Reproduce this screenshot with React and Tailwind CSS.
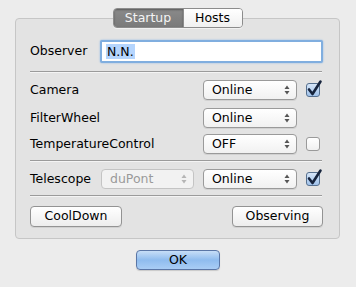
import React from 'react'

const font = { fontFamily: '"DejaVu Sans", "Noto Sans", sans-serif' }

function Arrows({ dim }) {
  const c = dim ? '#b5b5b5' : '#555'
  return (
    <svg width="6" height="10" viewBox="0 0 6 10" className="shrink-0">
      <path d="M3 0.5 L5.5 4 L0.5 4 Z" fill={c} />
      <path d="M3 9.5 L5.5 6 L0.5 6 Z" fill={c} />
    </svg>
  )
}

function Popup({ value, width = 'w-[94px]', dim }) {
  return (
    <div
      className={`${width} h-[20px] shrink-0 flex items-center justify-between pl-[8px] pr-[6px] rounded-[4px] border ${
        dim ? 'border-[#c4c4c4] bg-[#f2f2f2] text-[#9a9a9a]' : 'border-[#9a9a9a] bg-gradient-to-b from-white to-[#f1f1f1] text-black shadow-[0_1px_0_rgba(0,0,0,0.08)]'
      }`}
    >
      <span className="leading-none">{value}</span>
      <Arrows dim={dim} />
    </div>
  )
}

function Check({ checked }) {
  if (!checked) {
    return <div className="w-[14px] h-[14px] shrink-0 rounded-[3px] border border-[#9a9a9a] bg-gradient-to-b from-white to-[#f0f0f0]" />
  }
  return (
    <div className="relative w-[14px] h-[14px] shrink-0 rounded-[3px] border border-[#56708f] bg-gradient-to-b from-[#d6e6f8] to-[#9fc1ea]">
      <svg className="absolute -left-[1px] -top-[4px] overflow-visible" width="16" height="18" viewBox="0 0 16 18">
        <path d="M3 9.5 L6.5 14 L14.5 1.5" fill="none" stroke="#16243d" strokeWidth="2.6" strokeLinecap="round" strokeLinejoin="round" />
      </svg>
    </div>
  )
}

function Row({ label, value, checkbox, checked, className = '' }) {
  return (
    <div className={`flex items-center pr-[3px] ${className}`}>
      <span className="flex-1">{label}</span>
      <Popup value={value} />
      <div className="w-[14px] ml-[9px] flex">
        {checkbox && <Check checked={checked} />}
      </div>
    </div>
  )
}

function Button({ children, className = '' }) {
  return (
    <div className={`h-[21px] flex items-center justify-center rounded-[4px] border border-[#939393] bg-gradient-to-b from-white to-[#ededed] shadow-[0_1px_0_rgba(0,0,0,0.08)] ${className}`}>
      {children}
    </div>
  )
}

export default function App() {
  return (
    <div className="w-[356px] h-[287px] bg-[#ececec] text-[12.5px] text-black overflow-hidden" style={font}>
      <div className="pt-[18px] pl-[15px]">
        <div className="relative w-[325px] h-[221px] rounded-[4px] border border-[#c6c6c6] bg-[#e3e3e3] pl-[14px] pr-[16px] pt-[21px]">
          <div className="absolute left-1/2 -translate-x-1/2 -top-[11px] flex h-[20px] rounded-[4px] border border-[#8c8c8c] overflow-hidden shadow-[0_1px_0_rgba(255,255,255,0.5)]">
            <div className="w-[69px] flex items-center justify-center bg-gradient-to-b from-[#8a8a8a] to-[#7a7a7a] text-[#f4f4f4] shadow-[inset_0_1px_2px_rgba(0,0,0,0.35)]">
              Startup
            </div>
            <div className="w-[59px] flex items-center justify-center bg-gradient-to-b from-white to-[#f0f0f0] border-l border-[#8c8c8c]">
              Hosts
            </div>
          </div>

          <div className="flex items-center">
            <span className="w-[70px]">Observer</span>
            <div className="flex-1 h-[23px] flex items-center rounded-[2px] border-[2px] border-[#80aedf] bg-white shadow-[0_0_2px_#8ab6e6] pl-[4px]">
              <span className="bg-[#b5d5fd] leading-[15px] px-[1px]">N.N.</span>
            </div>
          </div>

          <div className="mt-[8px] mr-[1px] h-[1px] bg-[#9b9b9b] shadow-[0_1px_0_#f4f4f4]" />

          <Row className="mt-[8px]" label="Camera" value="Online" checkbox checked />
          <Row className="mt-[8px]" label="FilterWheel" value="Online" />
          <Row className="mt-[6px]" label="TemperatureControl" value="OFF" checkbox />

          <div className="mt-[6px] mr-[1px] h-[1px] bg-[#9b9b9b] shadow-[0_1px_0_#f4f4f4]" />

          <div className="mt-[8px] flex items-center pr-[3px]">
            <span className="w-[71px]">Telescope</span>
            <Popup value="duPont" width="w-[93px]" dim />
            <div className="flex-1" />
            <Popup value="Online" />
            <div className="ml-[9px] flex">
              <Check checked />
            </div>
          </div>

          <div className="mt-[6px] mr-[1px] h-[1px] bg-[#9b9b9b] shadow-[0_1px_0_#f4f4f4]" />

          <div className="mt-[10px] flex justify-between">
            <Button className="w-[92px]">CoolDown</Button>
            <Button className="w-[91px]">Observing</Button>
          </div>
        </div>
      </div>

      <div className="mt-[11px] flex justify-center pl-[0px]">
        <div className="w-[84px] h-[20px] flex items-center justify-center rounded-[4px] border border-[#5a76a6] bg-gradient-to-b from-[#c7def7] via-[#8fbcee] to-[#a9cdf5] shadow-[0_1px_1px_rgba(0,0,0,0.15)]">
          OK
        </div>
      </div>
    </div>
  )
}
